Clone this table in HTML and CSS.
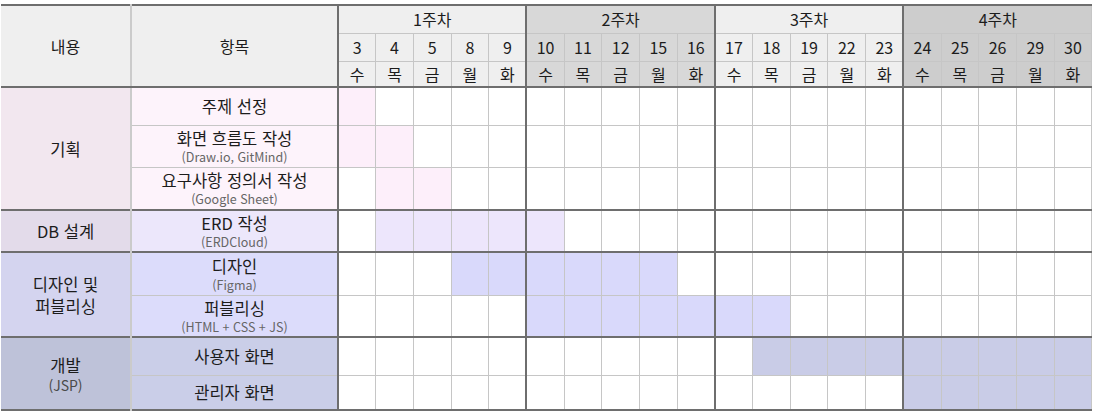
FILE: index.html
```html
<!DOCTYPE html>
<html lang="ko">
<head>
<meta charset="utf-8">
<title>일정표</title>
<link rel="stylesheet" href="styles.css">
</head>
<body>
<table class="plan">
  <colgroup>
    <col class="c-cat"><col class="c-item">
    <col class="c-day"><col class="c-day"><col class="c-day"><col class="c-day"><col class="c-day">
    <col class="c-day"><col class="c-day"><col class="c-day"><col class="c-day"><col class="c-day">
    <col class="c-day"><col class="c-day"><col class="c-day"><col class="c-day"><col class="c-day">
    <col class="c-day"><col class="c-day"><col class="c-day"><col class="c-day"><col class="c-day">
  </colgroup>
  <thead>
    <tr class="h1">
      <th rowspan="3" class="hd cat">내용</th>
      <th rowspan="3" class="hd item">항목</th>
      <th colspan="5" class="wa ws">1주차</th>
      <th colspan="5" class="wb ws">2주차</th>
      <th colspan="5" class="wa ws">3주차</th>
      <th colspan="5" class="wc ws">4주차</th>
    </tr>
    <tr class="h2">
      <th class="wa ws">3</th><th class="wa">4</th><th class="wa">5</th><th class="wa">8</th><th class="wa">9</th>
      <th class="wb ws">10</th><th class="wb">11</th><th class="wb">12</th><th class="wb">15</th><th class="wb">16</th>
      <th class="wa ws">17</th><th class="wa">18</th><th class="wa">19</th><th class="wa">22</th><th class="wa">23</th>
      <th class="wc ws">24</th><th class="wc">25</th><th class="wc">26</th><th class="wc">29</th><th class="wc">30</th>
    </tr>
    <tr class="h3">
      <th class="wa ws">수</th><th class="wa">목</th><th class="wa">금</th><th class="wa">월</th><th class="wa">화</th>
      <th class="wb ws">수</th><th class="wb">목</th><th class="wb">금</th><th class="wb">월</th><th class="wb">화</th>
      <th class="wa ws">수</th><th class="wa">목</th><th class="wa">금</th><th class="wa">월</th><th class="wa">화</th>
      <th class="wc ws">수</th><th class="wc">목</th><th class="wc">금</th><th class="wc">월</th><th class="wc">화</th>
    </tr>
  </thead>
  <tbody>
    <!-- 기획 -->
    <tr class="g-plan grp r38">
      <td rowspan="3" class="cat">기획</td>
      <td class="item">주제 선정</td>
      <td class="ws on"></td><td></td><td></td><td></td><td></td>
      <td class="ws"></td><td></td><td></td><td></td><td></td>
      <td class="ws"></td><td></td><td></td><td></td><td></td>
      <td class="ws"></td><td></td><td></td><td></td><td></td>
    </tr>
    <tr class="g-plan r42">
      <td class="item">화면 흐름도 작성<span class="sub">(Draw.io, GitMind)</span></td>
      <td class="ws on"></td><td class="on"></td><td></td><td></td><td></td>
      <td class="ws"></td><td></td><td></td><td></td><td></td>
      <td class="ws"></td><td></td><td></td><td></td><td></td>
      <td class="ws"></td><td></td><td></td><td></td><td></td>
    </tr>
    <tr class="g-plan r43">
      <td class="item">요구사항 정의서 작성<span class="sub">(Google Sheet)</span></td>
      <td class="ws"></td><td class="on"></td><td class="on"></td><td></td><td></td>
      <td class="ws"></td><td></td><td></td><td></td><td></td>
      <td class="ws"></td><td></td><td></td><td></td><td></td>
      <td class="ws"></td><td></td><td></td><td></td><td></td>
    </tr>
    <!-- DB 설계 -->
    <tr class="g-db grp r42">
      <td class="cat">DB 설계</td>
      <td class="item">ERD 작성<span class="sub">(ERDCloud)</span></td>
      <td class="ws"></td><td class="on"></td><td class="on"></td><td class="on"></td><td class="on"></td>
      <td class="ws on"></td><td></td><td></td><td></td><td></td>
      <td class="ws"></td><td></td><td></td><td></td><td></td>
      <td class="ws"></td><td></td><td></td><td></td><td></td>
    </tr>
    <!-- 디자인 및 퍼블리싱 -->
    <tr class="g-design grp r43">
      <td rowspan="2" class="cat">디자인 및<br>퍼블리싱</td>
      <td class="item">디자인<span class="sub">(Figma)</span></td>
      <td class="ws"></td><td></td><td></td><td class="on"></td><td class="on"></td>
      <td class="ws on"></td><td class="on"></td><td class="on"></td><td class="on"></td><td></td>
      <td class="ws"></td><td></td><td></td><td></td><td></td>
      <td class="ws"></td><td></td><td></td><td></td><td></td>
    </tr>
    <tr class="g-design r42">
      <td class="item">퍼블리싱<span class="sub">(HTML + CSS + JS)</span></td>
      <td class="ws"></td><td></td><td></td><td></td><td></td>
      <td class="ws on"></td><td class="on"></td><td class="on"></td><td class="on"></td><td class="on"></td>
      <td class="ws on"></td><td class="on"></td><td></td><td></td><td></td>
      <td class="ws"></td><td></td><td></td><td></td><td></td>
    </tr>
    <!-- 개발 -->
    <tr class="g-dev grp r38">
      <td rowspan="2" class="cat">개발<span class="sub cat-sub">(JSP)</span></td>
      <td class="item">사용자 화면</td>
      <td class="ws"></td><td></td><td></td><td></td><td></td>
      <td class="ws"></td><td></td><td></td><td></td><td></td>
      <td class="ws"></td><td class="on"></td><td class="on"></td><td class="on"></td><td class="on"></td>
      <td class="ws on"></td><td class="on"></td><td class="on"></td><td class="on"></td><td class="on"></td>
    </tr>
    <tr class="g-dev r36">
      <td class="item">관리자 화면</td>
      <td class="ws"></td><td></td><td></td><td></td><td></td>
      <td class="ws"></td><td></td><td></td><td></td><td></td>
      <td class="ws"></td><td></td><td></td><td></td><td></td>
      <td class="ws on"></td><td class="on"></td><td class="on"></td><td class="on"></td><td class="on"></td>
    </tr>
  </tbody>
</table>
</body>
</html>
```

FILE: styles.css
```css
html, body {
  margin: 0;
  background: #ffffff;
}

body {
  padding: 4px 0 0 1px;
  font-family: "Noto Sans CJK KR", "Noto Sans", sans-serif;
  color: #1c1c1c;
}

.plan {
  border-collapse: collapse;
  table-layout: fixed;
  width: 1091px;
  border-top: 2px solid #6e6e6e;
  border-bottom: 2px solid #6e6e6e;
  border-right: 1px solid #bdbdbd;
}

.c-cat { width: 130px; }
.c-item { width: 207px; }
.c-day { width: 37.7px; }

.plan th,
.plan td {
  border: 1px solid #c6c6c6;
  padding: 0;
  text-align: center;
  vertical-align: middle;
  font-weight: 400;
  font-size: 16px;
  line-height: 22px;
  background: #ffffff;
}

.plan tbody td {
  font-size: 16.5px;
}

/* header */
.h1 { height: 28px; }
.h2 { height: 28px; }
.h3 { height: 26px; }

.plan thead tr.h3 th,
.plan thead th.hd {
  border-bottom: 2px solid #6e6e6e;
}

.plan th.hd { background: #efefef; }
.plan th.wa { background: #efefef; }
.plan th.wb { background: #d8d8d8; }
.plan th.wc { background: #cdcdcd; }

.plan .cat {
  border-left: none;
  border-right: 2px solid #cbcbcb;
}

.plan .item {
  border-right: 2px solid #6e6e6e;
}

.plan .ws {
  border-left: 2px solid #6e6e6e;
}

/* body rows */
.r38 { height: 38px; }
.r42 { height: 42px; }
.r43 { height: 43px; }
.r36 { height: 35px; }

.plan tr.grp td,
.plan td.cat {
  border-top: 2px solid #6e6e6e;
}

.sub {
  display: block;
  font-size: 12.5px;
  line-height: 16px;
  color: #666666;
}

.cat-sub {
  font-size: 14px;
  line-height: 18px;
  color: #4a4a4a;
}

/* group colours */
.g-plan td.cat { background: #f2e7ef; }
.g-plan td.item { background: #fdf3fb; }
.g-plan td.on { background: #fdeffa; }

.g-db td.cat { background: #e3dbea; }
.g-db td.item { background: #ece7fb; }
.g-db td.on { background: #ede6fc; }

.g-design td.cat { background: #d4d4ef; }
.g-design td.item { background: #dcdcfb; }
.g-design td.on { background: #d9d9fb; }

.g-dev td.cat { background: #bec2d9; }
.g-dev td.item { background: #cacee8; }
.g-dev td.on { background: #c9cce7; }
```
